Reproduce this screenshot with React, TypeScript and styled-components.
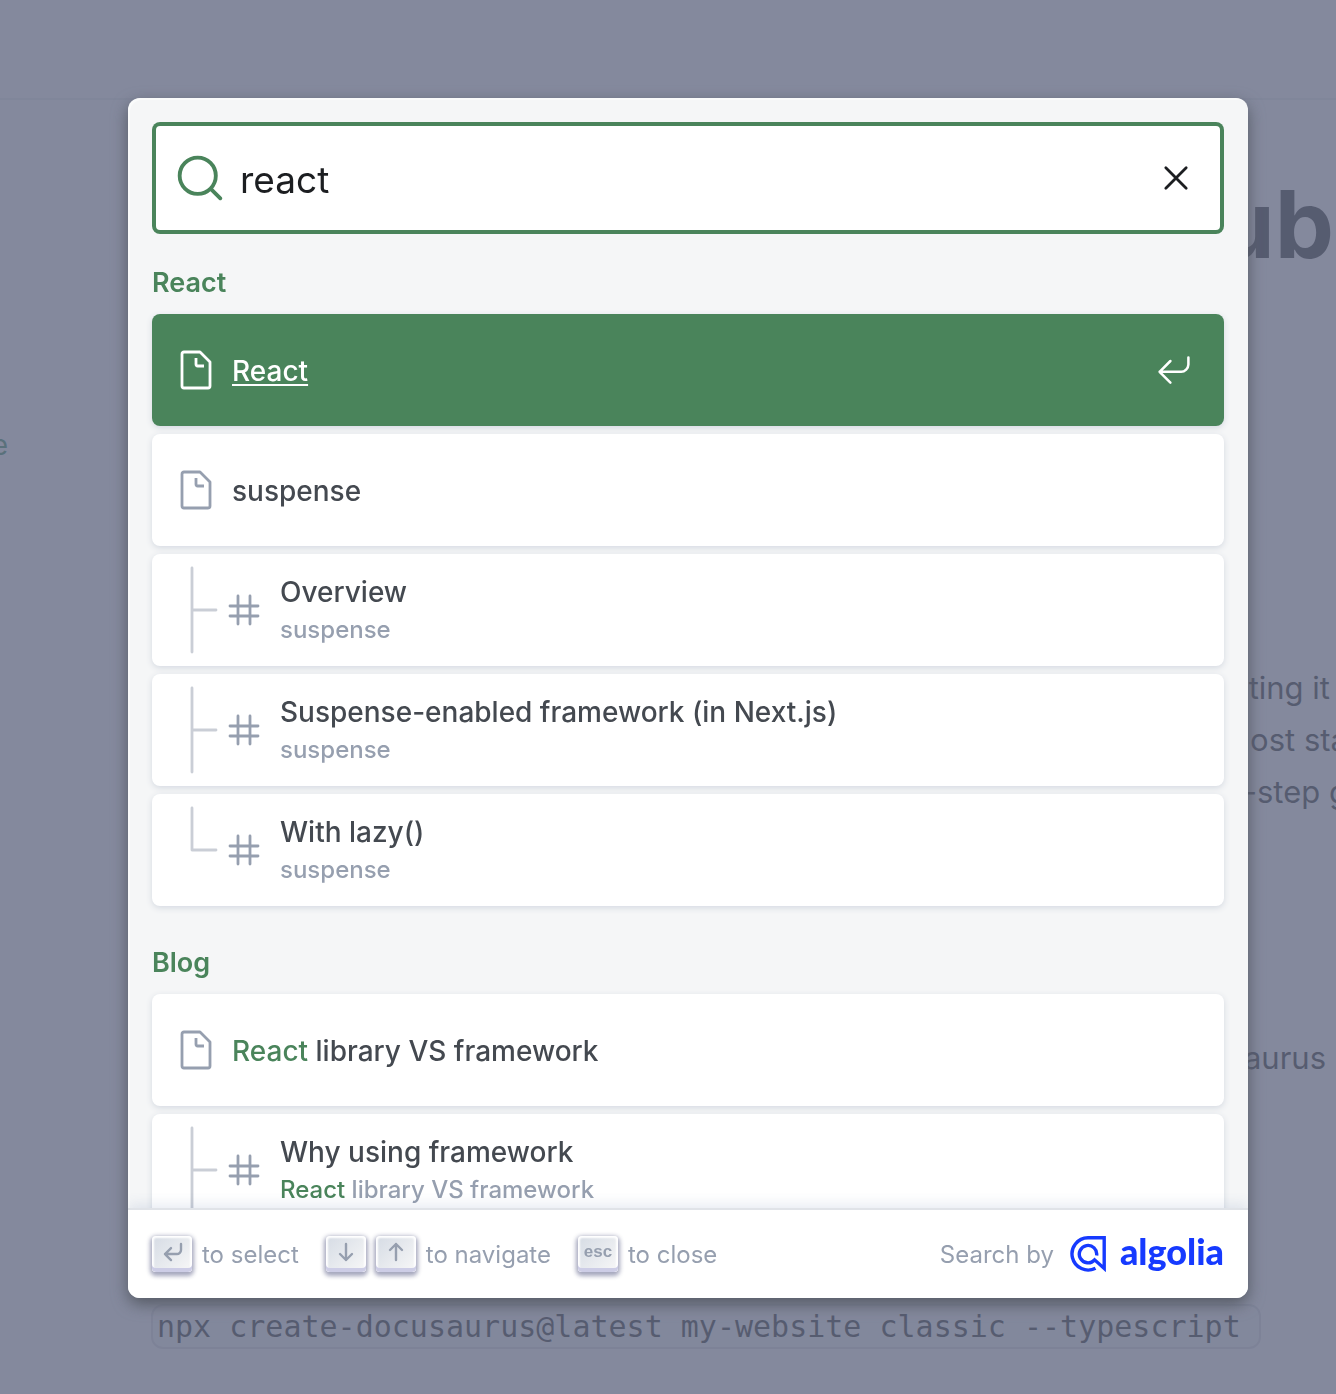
import React from "react";
import styled, { createGlobalStyle, css } from "styled-components";

const GREEN = "#4a845b";
const MUTED = "#969faf";
const UI_FONT = 'Inter, "Liberation Sans", sans-serif';

const GlobalStyle = createGlobalStyle`
  *, *::before, *::after { box-sizing: border-box; }
  body { margin: 0; background: #fff; font-family: ${UI_FONT}; font-size: 31px; color: #1c1e21; }
  ul { list-style: none; margin: 0; padding: 0; }
  button, input { font: inherit; }
`;

/* Page below the search dialog */
const Page = styled.div`
  min-height: 100vh;
  display: flex;
  flex-direction: column;
  overflow: hidden;
`;
const Navbar = styled.header`
  height: 100px;
  border-bottom: 2px solid #ebedf0;
`;
const Columns = styled.div`
  display: flex;
  justify-content: space-between;
`;
const Sidebar = styled.nav`
  width: 8px;
  display: flex;
  justify-content: flex-end;
  padding-top: 325px;
  font-size: 28px;
  line-height: 40px;
  a { color: #2e8555; text-decoration: none; }
`;
const Article = styled.main`
  width: 120px;
  padding-top: 64px;
  display: flex;
  flex-direction: column;
  align-items: flex-end;
  white-space: nowrap;
`;
const Heading = styled.h1`
  margin: 0 2px 378px 0;
  font-size: 94px;
  line-height: 120px;
  font-weight: 700;
`;
const Line = styled.p<{ $clipped?: boolean }>`
  margin: 0 ${(p) => (p.$clipped ? "-12px" : "6px")} 0 0;
  line-height: 52px;
`;
const Note = styled.p`
  margin: 214px 10px 0 0;
  line-height: 52px;
`;
const Command = styled.code`
  align-self: flex-start;
  margin: 220px 0 0 151px;
  padding: 0 18px 0 4px;
  border: 2px solid #dadde1;
  border-radius: 12px;
  background: #f6f7f8;
  font-family: "DejaVu Sans Mono", monospace;
  font-size: 30px;
  line-height: 41px;
  white-space: nowrap;
`;

/* Dialog */
const Backdrop = styled.div`
  position: fixed;
  inset: 0;
  display: flex;
  justify-content: center;
  align-items: flex-start;
  padding: 98px 88px 96px 128px;
  background: rgba(101, 108, 133, 0.8);
`;
const Modal = styled.div`
  flex: 1;
  max-width: 1120px;
  height: 100%;
  display: flex;
  flex-direction: column;
  overflow: hidden;
  border-radius: 12px;
  background: #f5f6f7;
  box-shadow: inset 2px 2px 0 0 rgba(255, 255, 255, 0.5), 0 6px 16px 0 #555a64;
`;
const SearchBar = styled.form`
  flex: none;
  margin: 24px 24px 0;
  height: 112px;
  padding: 0 24px;
  display: flex;
  align-items: center;
  border-radius: 8px;
  background: #fff;
  box-shadow: inset 0 0 0 4px ${GREEN};
`;
const SearchLabel = styled.label`
  display: flex;
  color: ${GREEN};
`;
const SearchInput = styled.input`
  flex: 1;
  min-width: 0;
  height: 80px;
  padding: 2px 0 0 16px;
  border: 0;
  outline: 0;
  background: transparent;
  color: #1c1e21;
  font-size: 37px;
`;
const IconButton = styled.button<{ $pad: number }>`
  display: flex;
  padding: ${(p) => p.$pad}px;
  border: 0;
  background: none;
  color: inherit;
  cursor: pointer;
`;
const Results = styled.div`
  flex: 1;
  min-height: 0;
  padding: 0 24px;
  overflow: hidden;
`;
const GroupTitle = styled.h2`
  margin: 0;
  padding-top: 18px;
  color: ${GREEN};
  font-size: 27px;
  line-height: 62px;
  font-weight: 600;
`;
const Hit = styled.li<{ $selected?: boolean }>`
  display: flex;
  align-items: center;
  height: 112px;
  margin-bottom: 8px;
  padding: 0 24px;
  border-radius: 8px;
  background: #fff;
  color: #444950;
  box-shadow: 0 2px 6px 0 #d4d9e1;
  --icon: ${MUTED};
  ${(p) =>
    p.$selected &&
    css`
      background: ${GREEN};
      color: #fff;
      --icon: #fff;
    `}
`;
const HitLink = styled.a<{ $selected?: boolean }>`
  flex: 1;
  min-width: 0;
  display: flex;
  align-items: center;
  color: inherit;
  font-weight: 500;
  text-decoration: none;
  svg { flex: none; color: var(--icon); }
  mark {
    background: none;
    color: ${(p) => (p.$selected ? "inherit" : GREEN)};
    text-decoration: ${(p) => (p.$selected ? "underline" : "none")};
    text-underline-offset: 3px;
    text-decoration-thickness: 2px;
  }
`;
const HitText = styled.span`
  display: flex;
  flex-direction: column;
  gap: 4px;
  padding: 2px 16px 0;
  white-space: nowrap;
`;
const HitTitle = styled.span`
  font-size: 28px;
  line-height: 34px;
`;
const HitPath = styled.span`
  color: ${MUTED};
  font-size: 24px;
  line-height: 34px;
`;
const Footer = styled.footer`
  flex: none;
  position: relative;
  height: 88px;
  padding: 0 24px;
  display: flex;
  align-items: center;
  justify-content: space-between;
  background: #fff;
  color: ${MUTED};
  font-size: 24px;
  box-shadow: 0 -2px 0 0 #e0e3e8, 0 -6px 12px 0 rgba(69, 98, 155, 0.12);
`;
const Commands = styled.ul`
  display: flex;
  gap: 27px;
  li { display: flex; align-items: center; gap: 10px; }
`;
const Key = styled.kbd`
  width: 40px;
  height: 36px;
  padding-bottom: 4px;
  display: flex;
  align-items: center;
  justify-content: center;
  border-radius: 4px;
  background: linear-gradient(-225deg, #d5dbe4, #f8f8f8);
  box-shadow: inset 0 -4px 0 0 #cdcde6, inset 0 0 2px 2px #fff, 0 2px 4px 2px rgba(30, 35, 90, 0.4);
  color: ${MUTED};
  font-family: "Liberation Sans", sans-serif;
  font-size: 17px;
  font-weight: 700;
`;
const Credit = styled.a`
  display: flex;
  align-items: center;
  gap: 16px;
  color: inherit;
  text-decoration: none;
`;
const Brand = styled.span`
  display: flex;
  align-items: center;
  gap: 14px;
  color: #163aff;
`;
const Wordmark = styled.span`
  padding-bottom: 6px;
  font-family: Lato, sans-serif;
  font-size: 36px;
  line-height: 36px;
  font-weight: 900;
`;

type IconProps = { size: number; d: string; width?: number; box?: number; cap?: "round" | "butt" };
const Icon = ({ size, d, width = 1.4, box = 20, cap = "round" }: IconProps) => (
  <svg width={size} height={size} viewBox={`0 0 ${box} ${box}`} fill="none" stroke="currentColor"
    strokeWidth={width} strokeLinecap={cap} strokeLinejoin="round" aria-hidden="true">
    <path d={d} />
  </svg>
);
const SEARCH = "M14.386 14.386l4.0877 4.0877-4.0877-4.0877c-2.9418 2.9419-7.7115 2.9419-10.6533 0-2.9419-2.9418-2.9419-7.7115 0-10.6533 2.9418-2.9419 7.7115-2.9419 10.6533 0 2.9419 2.9418 2.9419 7.7115 0 10.6533z";
const CLEAR = "M4.91 4.91l10.18 10.18M15.09 4.91L4.91 15.09";
const PAGE = "M17 6v12c0 .52-.2 1-1 1H4c-.7 0-1-.33-1-1V2c0-.55.42-1 1-1h8l5 5zM14 8h-3.13c-.51 0-.87-.34-.87-.87V4";
const HASH = "M13 13h4-4V8H7v5h6v4-4H7V8H3h4V3v5h6V3v5h4-4v5zm-6 0v4-4H3h4z";
const ENTER = "M18 3v4c0 2-2 4-4 4H2M8 17l-6-6 6-6";

const Branch = ({ last }: { last?: boolean }) => (
  <svg width="48" height="108" viewBox="0 0 24 54" fill="none" stroke="currentColor" strokeWidth="1.4"
    strokeLinecap="round" strokeLinejoin="round" opacity="0.5" aria-hidden="true">
    <path d={last ? "M8 6v21M20 27H8.3" : "M8 6v42M20 27H8.3"} />
  </svg>
);
const AlgoliaMark = () => (
  <svg width="36" height="36" viewBox="0 0 36 36" fill="none" stroke="currentColor" strokeWidth="3.4" aria-hidden="true">
    <path d="M25.5 32.2A16.1 16.1 0 1 1 18 1.8H34.2V32.4L24.6 23.8A8.7 8.7 0 1 1 26.6 19.5" />
  </svg>
);

type HitData = { title: React.ReactNode; path?: React.ReactNode; last?: boolean; selected?: boolean };
const groups: { name: string; hits: HitData[] }[] = [
  {
    name: "React",
    hits: [
      { title: <span><mark>React</mark></span>, selected: true },
      { title: "suspense" },
      { title: "Overview", path: "suspense" },
      { title: "Suspense-enabled framework (in Next.js)", path: "suspense" },
      { title: "With lazy()", path: "suspense", last: true },
    ],
  },
  {
    name: "Blog",
    hits: [
      { title: <span><mark>React</mark> library VS framework</span> },
      { title: "Why using framework", path: <span><mark>React</mark> library VS framework</span> },
    ],
  },
];

const HitRow = ({ title, path, last, selected }: HitData) => (
  <Hit $selected={selected}>
    <HitLink href="#" $selected={selected}>
      {path && <Branch last={last} />}
      {path ? <Icon size={40} d={HASH} /> : <Icon size={40} d={PAGE} cap="butt" />}
      <HitText>
        <HitTitle>{title}</HitTitle>
        {path && <HitPath>{path}</HitPath>}
      </HitText>
    </HitLink>
    {selected && (
      <IconButton $pad={8} type="button" aria-label="Open result">
        <Icon size={36} d={ENTER} />
      </IconButton>
    )}
  </Hit>
);

export default function App() {
  return (
    <>
      <GlobalStyle />
      <Page>
        <Navbar />
        <Columns>
          <Sidebar><a href="#">e</a></Sidebar>
          <Article>
            <Heading>ub</Heading>
            <Line>ting it</Line>
            <Line $clipped>nost sta</Line>
            <Line $clipped>-step g</Line>
            <Note>aurus</Note>
          </Article>
        </Columns>
        <Command>npx create-docusaurus@latest my-website classic --typescript</Command>
      </Page>
      <Backdrop>
        <Modal role="dialog" aria-label="Search">
          <SearchBar onSubmit={(e) => e.preventDefault()}>
            <SearchLabel htmlFor="query" aria-label="Search"><Icon size={48} d={SEARCH} width={1.6} /></SearchLabel>
            <SearchInput id="query" type="text" defaultValue="react" autoComplete="off" spellCheck={false} />
            <IconButton $pad={4} type="reset" aria-label="Clear the query"><Icon size={40} d={CLEAR} /></IconButton>
          </SearchBar>
          <Results>
            {groups.map((group) => (
              <section key={group.name}>
                <GroupTitle>{group.name}</GroupTitle>
                <ul>
                  {group.hits.map((hit, i) => <HitRow key={i} {...hit} />)}
                </ul>
              </section>
            ))}
          </Results>
          <Footer>
            <Commands>
              <li>
                <Key><Icon size={30} box={15} width={1.2} d="M12 3.53v3c0 1-1 2-2 2H4M7 11.53l-3-3 3-3" /></Key>
                to select
              </li>
              <li>
                <Key><Icon size={30} box={15} width={1.2} d="M7.5 3.5v8M10.5 8.5l-3 3-3-3" /></Key>
                <Key><Icon size={30} box={15} width={1.2} d="M7.5 11.5v-8M10.5 6.5l-3-3-3 3" /></Key>
                to navigate
              </li>
              <li><Key>esc</Key>to close</li>
            </Commands>
            <Credit href="#">
              Search by
              <Brand><AlgoliaMark /><Wordmark>algolia</Wordmark></Brand>
            </Credit>
          </Footer>
        </Modal>
      </Backdrop>
    </>
  );
}
